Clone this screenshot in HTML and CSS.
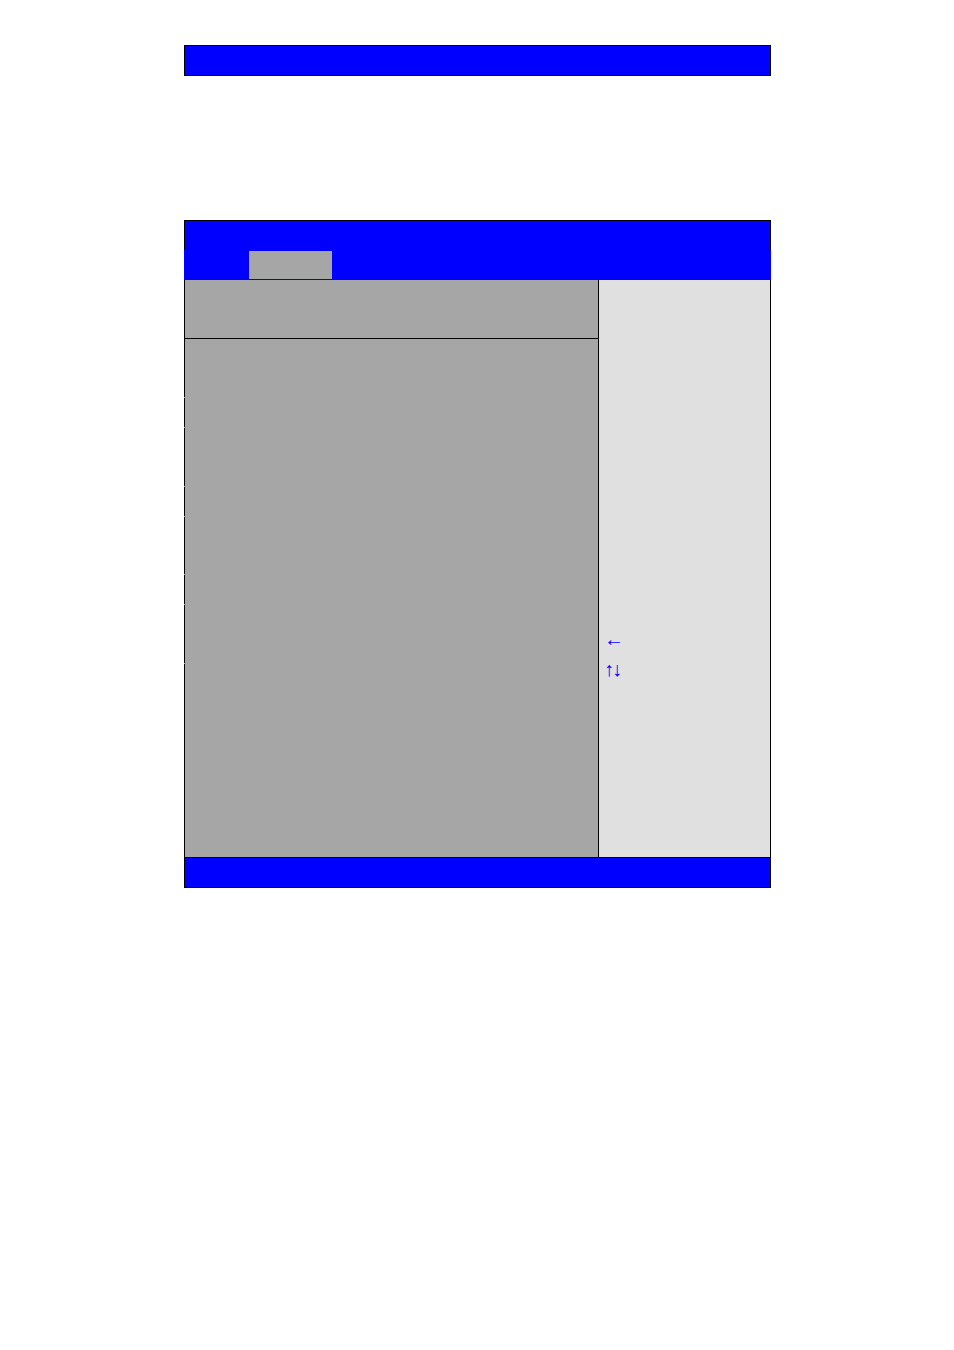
FILE: index.html
```html
<!DOCTYPE html>
<html lang="en">
<head>
<meta charset="utf-8">
<title>Setup</title>
<link rel="stylesheet" href="styles.css">
</head>
<body>
<header class="banner"></header>
<main class="setup">
  <div class="setup-title"></div>
  <nav class="tabs"><div class="tab-active"></div></nav>
  <div class="content">
    <section class="options">
      <div class="heading"></div>
      <div class="rows">
        <div class="row tall"></div>
        <div class="row"></div>
        <div class="row tall"></div>
        <div class="row"></div>
        <div class="row medium"></div>
        <div class="row"></div>
        <div class="row tall"></div>
        <div class="row rest"></div>
      </div>
    </section>
    <aside class="help">
      <p class="key"><span>←</span></p>
      <p class="key"><span>↑</span><span>↓</span></p>
    </aside>
  </div>
  <footer class="setup-footer"></footer>
</main>
</body>
</html>
```
FILE: styles.css
```css
* { box-sizing: border-box; }
body {
  margin: 0;
  padding: 45px 183px 48px 184px;
  background: #fff;
  font-family: "Liberation Serif", "Times New Roman", serif;
}
.banner {
  height: 31px;
  background: #00f;
  border: 1px solid #000;
}
.setup { margin-top: 144px; }
.setup-title {
  height: 30px;
  background: #00f;
  border: 1px solid #000;
  border-bottom: 0;
}
.tabs {
  height: 30px;
  padding: 1px 0 1px 65px;
  background: #00f;
}
.tab-active {
  width: 83px;
  height: 100%;
  background: #a6a6a6;
}
.content {
  display: grid;
  grid-template-columns: 1fr 173px;
  min-height: 577px;
}
.options {
  display: flex;
  flex-direction: column;
  background: #a6a6a6;
}
.heading {
  height: 59px;
  border-left: 1px solid #000;
  border-bottom: 1px solid #000;
}
.rows {
  flex: 1;
  display: flex;
  flex-direction: column;
  gap: 1px;
}
.row {
  height: 29px;
  border-left: 1px solid #000;
}
.medium { height: 57px; }
.tall { height: 58px; }
.rest { flex: 1; }
.help {
  padding: 344px 5px 0;
  background: #e0e0e0;
  border: solid #000;
  border-width: 0 1px;
}
.key {
  display: grid;
  grid-template-columns: 8px 8px;
  margin: 0;
  color: #00f;
  font-size: 20px;
  line-height: 30px;
}
.setup-footer {
  height: 31px;
  background: #00f;
  border: 1px solid #000;
}
```
